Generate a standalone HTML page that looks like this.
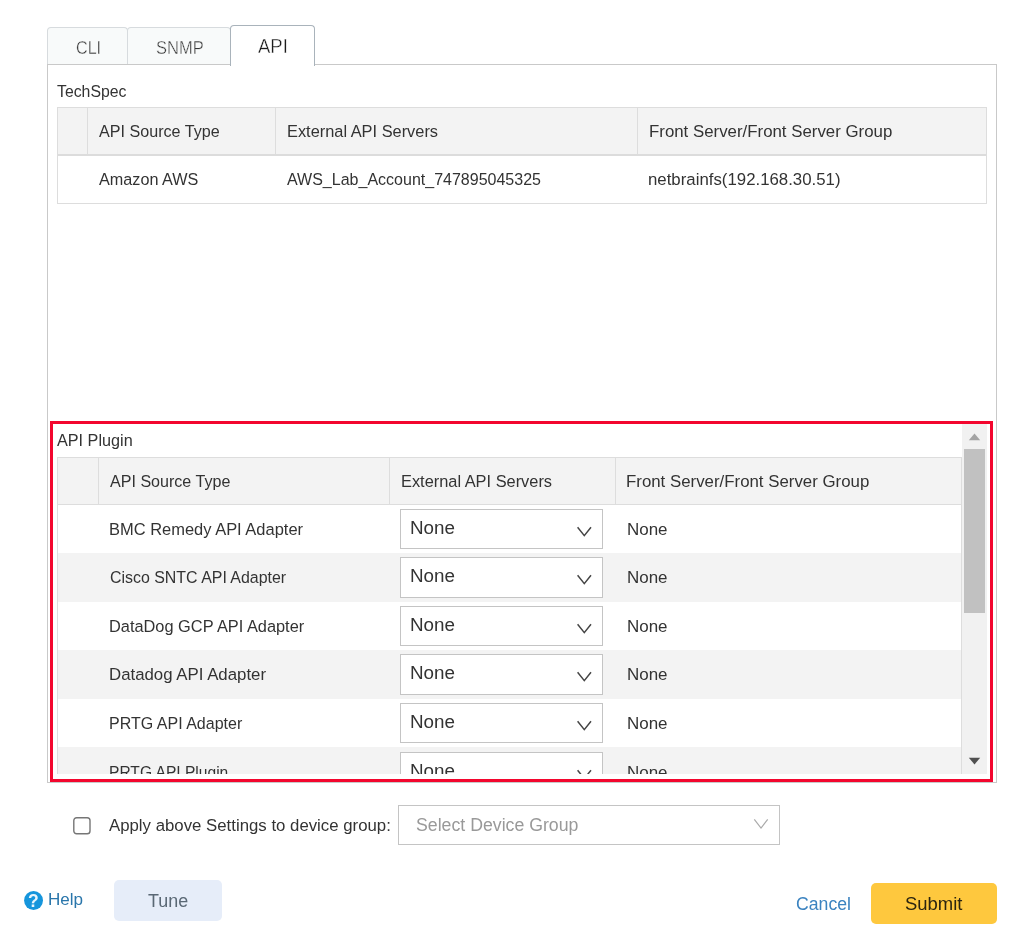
<!DOCTYPE html>
<html><head><meta charset="utf-8"><title>API Plugin Settings</title>
<style>
html,body{margin:0;padding:0;background:#fff}
body{width:1021px;height:951px;position:relative;overflow:hidden;font-family:"Liberation Sans", sans-serif}
div,span,svg{position:absolute;box-sizing:content-box}
span{white-space:pre;font-family:"Liberation Sans", sans-serif;transform-origin:0 0}
</style></head><body><div id="root" style="left:0;top:0;width:1021px;height:951px;will-change:transform">
<div style="left:47px;top:27px;width:79px;height:37px;background:#f8fafa;border:1px solid #d7dbde;border-bottom:none;border-radius:4px 4px 0 0"></div>
<div style="left:127px;top:27px;width:102px;height:37px;background:#f8fafa;border:1px solid #d7dbde;border-bottom:none;border-radius:4px 4px 0 0"></div>
<div style="left:47px;top:64px;width:948px;height:717px;border:1px solid #c9c9c9;background:#fff"></div>
<div style="left:230px;top:25px;width:83px;height:40px;background:#fff;border:1px solid #a9b3bb;border-bottom:none;border-radius:4px 4px 0 0"></div>
<span style="left:75.69px;top:39.00px;font-size:18px;line-height:18px;color:#363636;transform:scaleX(0.8958);-webkit-text-stroke:0.4px #f8fafa;">CLI</span>
<span style="left:155.66px;top:39.00px;font-size:18px;line-height:18px;color:#363636;transform:scaleX(0.9173);-webkit-text-stroke:0.4px #f8fafa;">SNMP</span>
<span style="left:258.06px;top:36.00px;font-size:20px;line-height:20px;color:#1c1c1c;transform:scaleX(0.9256);-webkit-text-stroke:0.4px #fff;">API</span>
<span style="left:57.45px;top:83.00px;font-size:16.25px;line-height:16.25px;color:#333;transform:scaleX(0.9732);">TechSpec</span>
<div style="left:57px;top:107px;width:928px;height:95px;border:1px solid #dddddd;background:#fff"></div>
<div style="left:58px;top:108px;width:928px;height:46px;background:#f3f3f3"></div>
<div style="left:58px;top:154px;width:928px;height:2px;background:#dcdcdc"></div>
<div style="left:87px;top:108px;width:1px;height:46px;background:#dddddd"></div>
<div style="left:275px;top:108px;width:1px;height:46px;background:#dddddd"></div>
<div style="left:637px;top:108px;width:1px;height:46px;background:#dddddd"></div>
<span style="left:98.87px;top:123.00px;font-size:16.25px;line-height:16.25px;color:#333;transform:scaleX(0.9917);">API Source Type</span>
<span style="left:286.66px;top:123.00px;font-size:16.25px;line-height:16.25px;color:#333;transform:scaleX(1.0074);">External API Servers</span>
<span style="left:648.62px;top:123.00px;font-size:16.25px;line-height:16.25px;color:#333;transform:scaleX(1.0361);">Front Server/Front Server Group</span>
<span style="left:98.57px;top:171.00px;font-size:16.25px;line-height:16.25px;color:#333;transform:scaleX(0.9972);">Amazon AWS</span>
<span style="left:286.67px;top:171.00px;font-size:16.25px;line-height:16.25px;color:#333;transform:scaleX(0.9852);">AWS_Lab_Account_747895045325</span>
<span style="left:648.29px;top:171.00px;font-size:16.25px;line-height:16.25px;color:#333;transform:scaleX(1.0346);">netbrainfs(192.168.30.51)</span>
<div style="left:53px;top:424px;width:934px;height:350px;overflow:hidden;background:#fff">
<span style="left:3.87px;top:8.00px;font-size:16.25px;line-height:16.25px;color:#333;transform:scaleX(0.9973);">API Plugin</span>
<div style="left:4px;top:33px;width:905px;height:48px;background:#dddddd"></div>
<div style="left:5px;top:34px;width:903px;height:46px;background:#f3f3f3"></div>
<div style="left:45px;top:34px;width:1px;height:46px;background:#dddddd"></div>
<div style="left:336px;top:34px;width:1px;height:46px;background:#dddddd"></div>
<div style="left:562px;top:34px;width:1px;height:46px;background:#dddddd"></div>
<span style="left:57.37px;top:49.00px;font-size:16.25px;line-height:16.25px;color:#333;transform:scaleX(0.9892);">API Source Type</span>
<span style="left:347.76px;top:49.00px;font-size:16.25px;line-height:16.25px;color:#333;transform:scaleX(1.0074);">External API Servers</span>
<span style="left:573.42px;top:49.00px;font-size:16.25px;line-height:16.25px;color:#333;transform:scaleX(1.0361);">Front Server/Front Server Group</span>
<div style="left:4px;top:81px;width:905px;height:48px;background:#dddddd"></div>
<div style="left:5px;top:81px;width:903px;height:48px;background:#fff"></div>
<span style="left:56.25px;top:97.00px;font-size:16.25px;line-height:16.25px;color:#333;transform:scaleX(1.0133);">BMC Remedy API Adapter</span>
<div style="left:347px;top:85px;width:201px;height:38px;border:1px solid #c4c4c4;background:#fff"></div>
<span style="left:357.46px;top:95.00px;font-size:18px;line-height:18px;color:#333;transform:scaleX(1.0453);">None</span>
<svg style="left:523px;top:101px" width="17" height="13" viewBox="0 0 17 13"><path d="M1.6 2.2 L8.3 10.6 L15 2.2" fill="none" stroke="#444" stroke-width="1.5"/></svg>
<span style="left:573.71px;top:97.00px;font-size:16.25px;line-height:16.25px;color:#333;transform:scaleX(1.0438);">None</span>
<div style="left:4px;top:129px;width:905px;height:49px;background:#dddddd"></div>
<div style="left:5px;top:129px;width:903px;height:49px;background:#f3f3f3"></div>
<span style="left:56.80px;top:145.00px;font-size:16.25px;line-height:16.25px;color:#333;transform:scaleX(0.9801);">Cisco SNTC API Adapter</span>
<div style="left:347px;top:133px;width:201px;height:39px;border:1px solid #c4c4c4;background:#fff"></div>
<span style="left:357.46px;top:143.00px;font-size:18px;line-height:18px;color:#333;transform:scaleX(1.0453);">None</span>
<svg style="left:523px;top:149px" width="17" height="13" viewBox="0 0 17 13"><path d="M1.6 2.2 L8.3 10.6 L15 2.2" fill="none" stroke="#444" stroke-width="1.5"/></svg>
<span style="left:573.71px;top:145.00px;font-size:16.25px;line-height:16.25px;color:#333;transform:scaleX(1.0438);">None</span>
<div style="left:4px;top:178px;width:905px;height:48px;background:#dddddd"></div>
<div style="left:5px;top:178px;width:903px;height:48px;background:#fff"></div>
<span style="left:56.26px;top:194.00px;font-size:16.25px;line-height:16.25px;color:#333;transform:scaleX(1.0067);">DataDog GCP API Adapter</span>
<div style="left:347px;top:182px;width:201px;height:38px;border:1px solid #c4c4c4;background:#fff"></div>
<span style="left:357.46px;top:192.00px;font-size:18px;line-height:18px;color:#333;transform:scaleX(1.0453);">None</span>
<svg style="left:523px;top:198px" width="17" height="13" viewBox="0 0 17 13"><path d="M1.6 2.2 L8.3 10.6 L15 2.2" fill="none" stroke="#444" stroke-width="1.5"/></svg>
<span style="left:573.71px;top:194.00px;font-size:16.25px;line-height:16.25px;color:#333;transform:scaleX(1.0438);">None</span>
<div style="left:4px;top:226px;width:905px;height:49px;background:#dddddd"></div>
<div style="left:5px;top:226px;width:903px;height:49px;background:#f3f3f3"></div>
<span style="left:56.22px;top:242.00px;font-size:16.25px;line-height:16.25px;color:#333;transform:scaleX(1.0347);">Datadog API Adapter</span>
<div style="left:347px;top:230px;width:201px;height:39px;border:1px solid #c4c4c4;background:#fff"></div>
<span style="left:357.46px;top:240.00px;font-size:18px;line-height:18px;color:#333;transform:scaleX(1.0453);">None</span>
<svg style="left:523px;top:246px" width="17" height="13" viewBox="0 0 17 13"><path d="M1.6 2.2 L8.3 10.6 L15 2.2" fill="none" stroke="#444" stroke-width="1.5"/></svg>
<span style="left:573.71px;top:242.00px;font-size:16.25px;line-height:16.25px;color:#333;transform:scaleX(1.0438);">None</span>
<div style="left:4px;top:275px;width:905px;height:48px;background:#dddddd"></div>
<div style="left:5px;top:275px;width:903px;height:48px;background:#fff"></div>
<span style="left:56.29px;top:291.00px;font-size:16.25px;line-height:16.25px;color:#333;transform:scaleX(0.9858);">PRTG API Adapter</span>
<div style="left:347px;top:279px;width:201px;height:38px;border:1px solid #c4c4c4;background:#fff"></div>
<span style="left:357.46px;top:289.00px;font-size:18px;line-height:18px;color:#333;transform:scaleX(1.0453);">None</span>
<svg style="left:523px;top:295px" width="17" height="13" viewBox="0 0 17 13"><path d="M1.6 2.2 L8.3 10.6 L15 2.2" fill="none" stroke="#444" stroke-width="1.5"/></svg>
<span style="left:573.71px;top:291.00px;font-size:16.25px;line-height:16.25px;color:#333;transform:scaleX(1.0438);">None</span>
<div style="left:4px;top:323px;width:905px;height:49px;background:#dddddd"></div>
<div style="left:5px;top:323px;width:903px;height:49px;background:#f3f3f3"></div>
<span style="left:56.32px;top:340.00px;font-size:16.25px;line-height:16.25px;color:#333;transform:scaleX(0.9592);">PRTG API Plugin</span>
<div style="left:347px;top:328px;width:201px;height:38px;border:1px solid #c4c4c4;background:#fff"></div>
<span style="left:357.46px;top:338.00px;font-size:18px;line-height:18px;color:#333;transform:scaleX(1.0453);">None</span>
<svg style="left:523px;top:344px" width="17" height="13" viewBox="0 0 17 13"><path d="M1.6 2.2 L8.3 10.6 L15 2.2" fill="none" stroke="#444" stroke-width="1.5"/></svg>
<span style="left:573.71px;top:340.00px;font-size:16.25px;line-height:16.25px;color:#333;transform:scaleX(1.0438);">None</span>
<div style="left:909px;top:0px;width:25px;height:350px;background:#f1f1f1"></div>
<div style="left:911px;top:25px;width:21px;height:164px;background:#c1c1c1"></div>
<svg style="left:915px;top:8px" width="14" height="10" viewBox="0 0 14 10"><path d="M0.8 8.2 L6.5 1.6 L12.2 8.2 Z" fill="#a3a3a3"/></svg>
<svg style="left:915px;top:332px" width="14" height="10" viewBox="0 0 14 10"><path d="M0.8 1.8 L6.5 8.4 L12.2 1.8 Z" fill="#505050"/></svg>
</div>
<div style="left:50px;top:421px;width:937px;height:355px;border:3px solid #f3062e"></div>
<svg style="left:70px;top:814px" width="24" height="24" viewBox="0 0 24 24"><rect x="3.8" y="3.7" width="16.2" height="16.1" rx="2.8" fill="#fff" stroke="#767676" stroke-width="1.4"/></svg>
<span style="left:108.57px;top:817.00px;font-size:16.25px;line-height:16.25px;color:#333;transform:scaleX(1.0331);">Apply above Settings to device group:</span>
<div style="left:398px;top:805px;width:380px;height:38px;border:1px solid #c4c4c4;background:#fff"></div>
<span style="left:415.80px;top:816.00px;font-size:18px;line-height:18px;color:#999;transform:scaleX(0.9839);">Select Device Group</span>
<svg style="left:752px;top:817px" width="18" height="14" viewBox="0 0 18 14"><path d="M2.3 2.4 L9 11 L15.7 2.4" fill="none" stroke="#aaa" stroke-width="1.2"/></svg>
<svg style="left:24px;top:891px" width="19" height="19" viewBox="0 0 19 19"><circle cx="9.55" cy="9.5" r="9.45" fill="#1595dc"/><text x="9.4" y="16.1" text-anchor="middle" font-family="Liberation Sans" font-weight="bold" font-size="17.5" fill="#e8f4fc">?</text></svg>
<span style="left:47.60px;top:891.00px;font-size:16.25px;line-height:16.25px;color:#2a76ab;transform:scaleX(1.0500);">Help</span>
<div style="left:114px;top:880px;width:108px;height:41px;background:#e6edf9;border-radius:5px"></div>
<span style="left:148.31px;top:893.00px;font-size:17.5px;line-height:17.5px;color:#5a6875;transform:scaleX(1.0242);">Tune</span>
<span style="left:795.92px;top:896.00px;font-size:17.5px;line-height:17.5px;color:#3b83c0;transform:scaleX(1.0086);">Cancel</span>
<div style="left:871px;top:883px;width:126px;height:41px;background:#fec83e;border-radius:5px"></div>
<span style="left:904.97px;top:896.00px;font-size:17.5px;line-height:17.5px;color:#2a2410;transform:scaleX(1.0547);">Submit</span>
</div></body></html>
